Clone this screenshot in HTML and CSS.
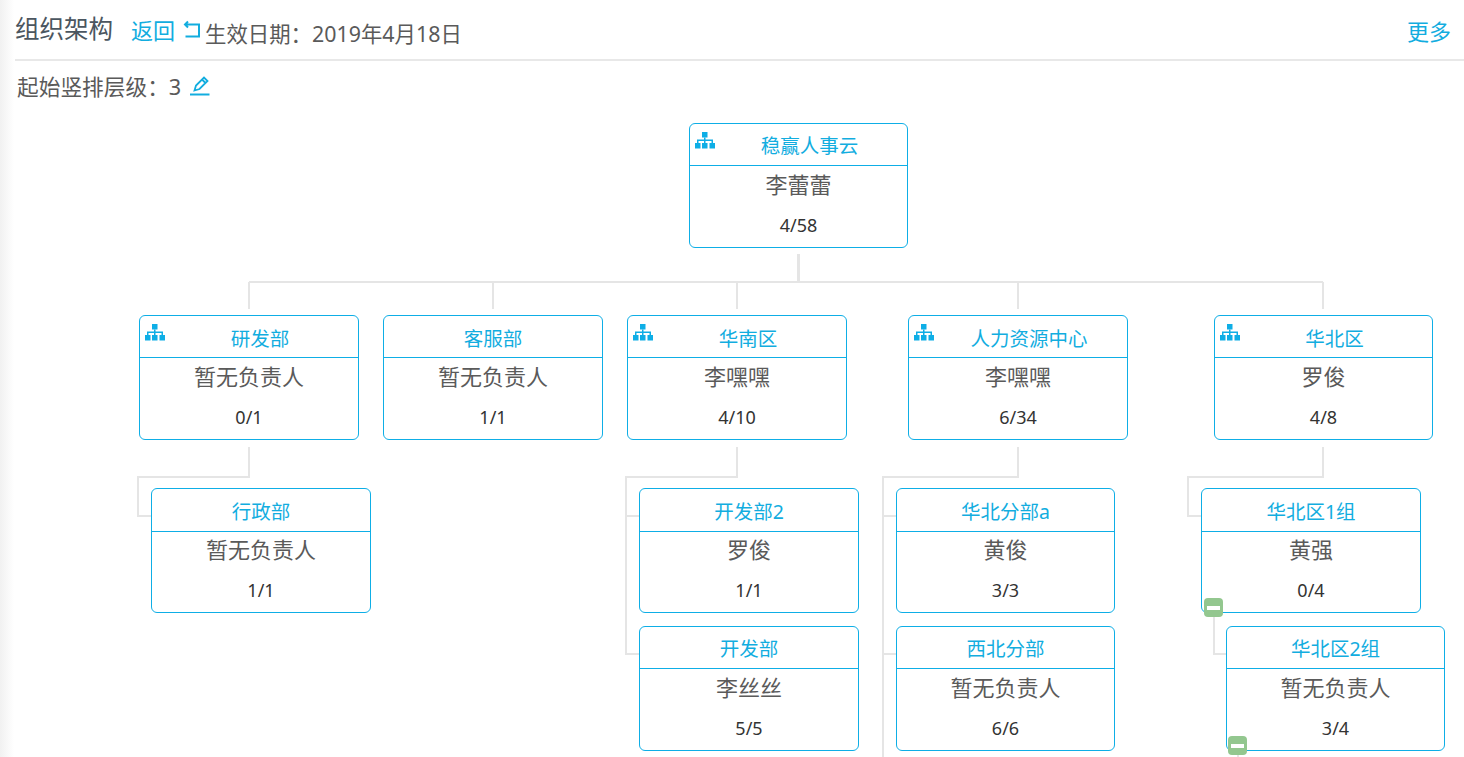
FILE: index.html
```html
<!DOCTYPE html>
<html lang="zh-CN">
<head>
<meta charset="utf-8">
<title>组织架构</title>
<link rel="stylesheet" href="styles.css">
</head>
<body>
<svg width="0" height="0" class="defs"><defs>
<symbol id="tree" viewBox="0 0 20 18"><path d="M7 1h5.500v5.500H7zM0 12h5.500v5.500H0zM7 12h5.500v5.500H7zM14.500 12H20v5.500h-5.500z"/><path d="M9 6.500h1.500v2H18V12h-1.500v-2h-6v2H9v-2H3.500v2H2V8.500h7z"/></symbol>
</defs></svg>
<header class="topbar">
  <div class="topbar-left">
    <h1 class="page-title">组织架构</h1>
    <a class="back-link">返回
      <svg class="back-icon" viewBox="0 0 20 20" width="20" height="20"><path d="M6 1.500 3 4.500l3 3M3.500 4.500H17v12H3.500" fill="none" stroke="currentColor" stroke-width="2"/></svg>
    </a>
    <span class="date">生效日期：2019年4月18日</span>
  </div>
  <a class="more">更多</a>
</header>
<div class="level-row">
  <span>起始竖排层级：3</span>
  <svg class="edit-icon" viewBox="0 0 20 22" width="20" height="22"><path d="M4.500 15.500 6 10.500 14 2.500l3.500 3.500L9.500 14zM12 4.500l3.500 3.500" fill="none" stroke="currentColor" stroke-width="1.800"/><path d="M0 19.500h19.500" stroke="currentColor" stroke-width="2"/></svg>
</div>
<main class="canvas">
  <svg class="wires" width="1464" height="757" viewBox="0 0 1464 757">
    <path class="trunk" d="M798.500 254V282"/>
    <path d="M249 282H1323M249 282V309M493 282V309M737 282V309M1018 282V309M1323 282V309"/>
    <path d="M249 447V477H138V516H151"/>
    <path d="M737 447V477H626V654H639M626 516H639"/>
    <path d="M1018 447V477H883V757M883 516H896M883 654H896"/>
    <path d="M1323 447V477H1188V516H1201"/>
    <path d="M1214 617V654H1226"/>
    <path d="M1238 755V757"/>
  </svg>

  <article class="node n-root"><div class="node-head snug"><svg class="node-icon"><use href="#tree"/></svg>稳赢人事云</div><div class="node-name">李蕾蕾</div><div class="node-count">4/58</div></article>

  <article class="node n-a"><div class="node-head"><svg class="node-icon"><use href="#tree"/></svg>研发部</div><div class="node-name">暂无负责人</div><div class="node-count">0/1</div></article>
  <article class="node n-b"><div class="node-head plain">客服部</div><div class="node-name">暂无负责人</div><div class="node-count">1/1</div></article>
  <article class="node n-c"><div class="node-head"><svg class="node-icon"><use href="#tree"/></svg>华南区</div><div class="node-name">李嘿嘿</div><div class="node-count">4/10</div></article>
  <article class="node n-d"><div class="node-head"><svg class="node-icon"><use href="#tree"/></svg>人力资源中心</div><div class="node-name">李嘿嘿</div><div class="node-count">6/34</div></article>
  <article class="node n-e"><div class="node-head"><svg class="node-icon"><use href="#tree"/></svg>华北区</div><div class="node-name">罗俊</div><div class="node-count">4/8</div></article>

  <article class="node n-a1"><div class="node-head plain tall">行政部</div><div class="node-name">暂无负责人</div><div class="node-count">1/1</div></article>
  <article class="node n-c1"><div class="node-head plain tall">开发部2</div><div class="node-name">罗俊</div><div class="node-count">1/1</div></article>
  <article class="node n-c2"><div class="node-head plain snug">开发部</div><div class="node-name">李丝丝</div><div class="node-count">5/5</div></article>
  <article class="node n-d1"><div class="node-head plain tall">华北分部a</div><div class="node-name">黄俊</div><div class="node-count">3/3</div></article>
  <article class="node n-d2"><div class="node-head plain snug">西北分部</div><div class="node-name">暂无负责人</div><div class="node-count">6/6</div></article>
  <article class="node n-e1"><div class="node-head plain tall">华北区1组</div><div class="node-name">黄强</div><div class="node-count">0/4</div><span class="toggle"></span></article>
  <article class="node n-e2"><div class="node-head plain snug">华北区2组</div><div class="node-name">暂无负责人</div><div class="node-count">3/4</div><span class="toggle"></span></article>
</main>
</body>
</html>
```
FILE: styles.css
```css
* { box-sizing: border-box; }
html, body { margin: 0; height: 757px; overflow: hidden; }
body {
  position: relative;
  width: 1464px;
  font-family: "Noto Sans", "Noto Sans CJK SC", sans-serif;
  color: #555;
  background: linear-gradient(to right, #f1f1f1 0, #fff 14px) no-repeat;
}
.defs { position: absolute; }
.topbar {
  height: 61px;
  margin-left: 15px;
  padding: 0 13px 0 0;
  border-bottom: 2px solid #e8e8e8;
  display: flex;
  justify-content: space-between;
  align-items: center;
}
.topbar-left { display: flex; align-items: center; }
.page-title {
  margin: 0 18px 0 0;
  font-size: 24.500px;
  font-weight: 400;
  line-height: 32px;
  color: #4b5660;
  position: relative;
  top: -1px;
}
.back-link {
  display: flex;
  align-items: center;
  gap: 7px;
  font-size: 22px;
  line-height: 32px;
  color: #12addf;
}
.back-icon { margin-right: 3px; color: #12addf; }
.date { font-size: 21.400px; line-height: 32px; color: #5a5a5a; position: relative; top: 4px; }
.more { font-size: 22px; line-height: 32px; color: #12addf; position: relative; top: 1px; }
.level-row {
  height: 48px;
  padding-left: 17px;
  display: flex;
  align-items: center;
  gap: 9px;
  font-size: 21.700px;
  color: #5a5a5a;
}
.edit-icon { color: #12addf; position: relative; top: 1px; }
.canvas { position: absolute; inset: 0; }
.wires { position: absolute; left: 0; top: 0; }
.wires path { fill: none; stroke: #e5e5e5; stroke-width: 2; }
.wires .trunk { stroke-width: 3; }
.node {
  position: absolute;
  width: 220px;
  height: 125px;
  background: #fff;
  border: 1px solid #0eaee6;
  border-radius: 6px;
  text-align: center;
}
.node-head {
  position: relative;
  height: 42px;
  padding: 10px 0 0 22px;
  border-bottom: 1px solid #0eaee6;
  font-size: 19.500px;
  line-height: 26px;
  color: #12addf;
}
.node-head.plain { padding-left: 0; }
.node-head.snug { padding-top: 9px; }
.node-head.tall { height: 43px; padding-top: 10px; }
.node-head.tall + .node-name { margin-top: 1px; }
.node-icon {
  position: absolute;
  left: 5px;
  top: 7px;
  width: 20px;
  height: 18px;
  fill: #0eaee6;
}
.node-name { margin-top: 2px; font-size: 22px; line-height: 32px; color: #5a5a5a; }
.node-count { margin-top: 13px; font-size: 18px; line-height: 24px; color: #333; }
.toggle {
  position: absolute;
  left: 2px;
  bottom: -5px;
  width: 19px;
  height: 19px;
  border-radius: 4px;
  background: #93c78f;
}
.toggle::after {
  content: "";
  position: absolute;
  left: 3px;
  top: 8px;
  width: 13px;
  height: 4px;
  background: #fff;
}
.n-e2 .toggle { left: 1px; }
.n-root { left: 689px; top: 123px; width: 219px; }
.n-a { left: 139px; top: 315px; }
.n-b { left: 383px; top: 315px; }
.n-c { left: 627px; top: 315px; }
.n-d { left: 908px; top: 315px; }
.n-e { left: 1214px; top: 315px; width: 219px; }
.n-a1 { left: 151px; top: 488px; }
.n-c1 { left: 639px; top: 488px; }
.n-c2 { left: 639px; top: 626px; }
.n-d1 { left: 896px; top: 488px; width: 219px; }
.n-d2 { left: 896px; top: 626px; width: 219px; }
.n-e1 { left: 1201px; top: 488px; }
.n-e2 { left: 1226px; top: 626px; width: 219px; }
```
